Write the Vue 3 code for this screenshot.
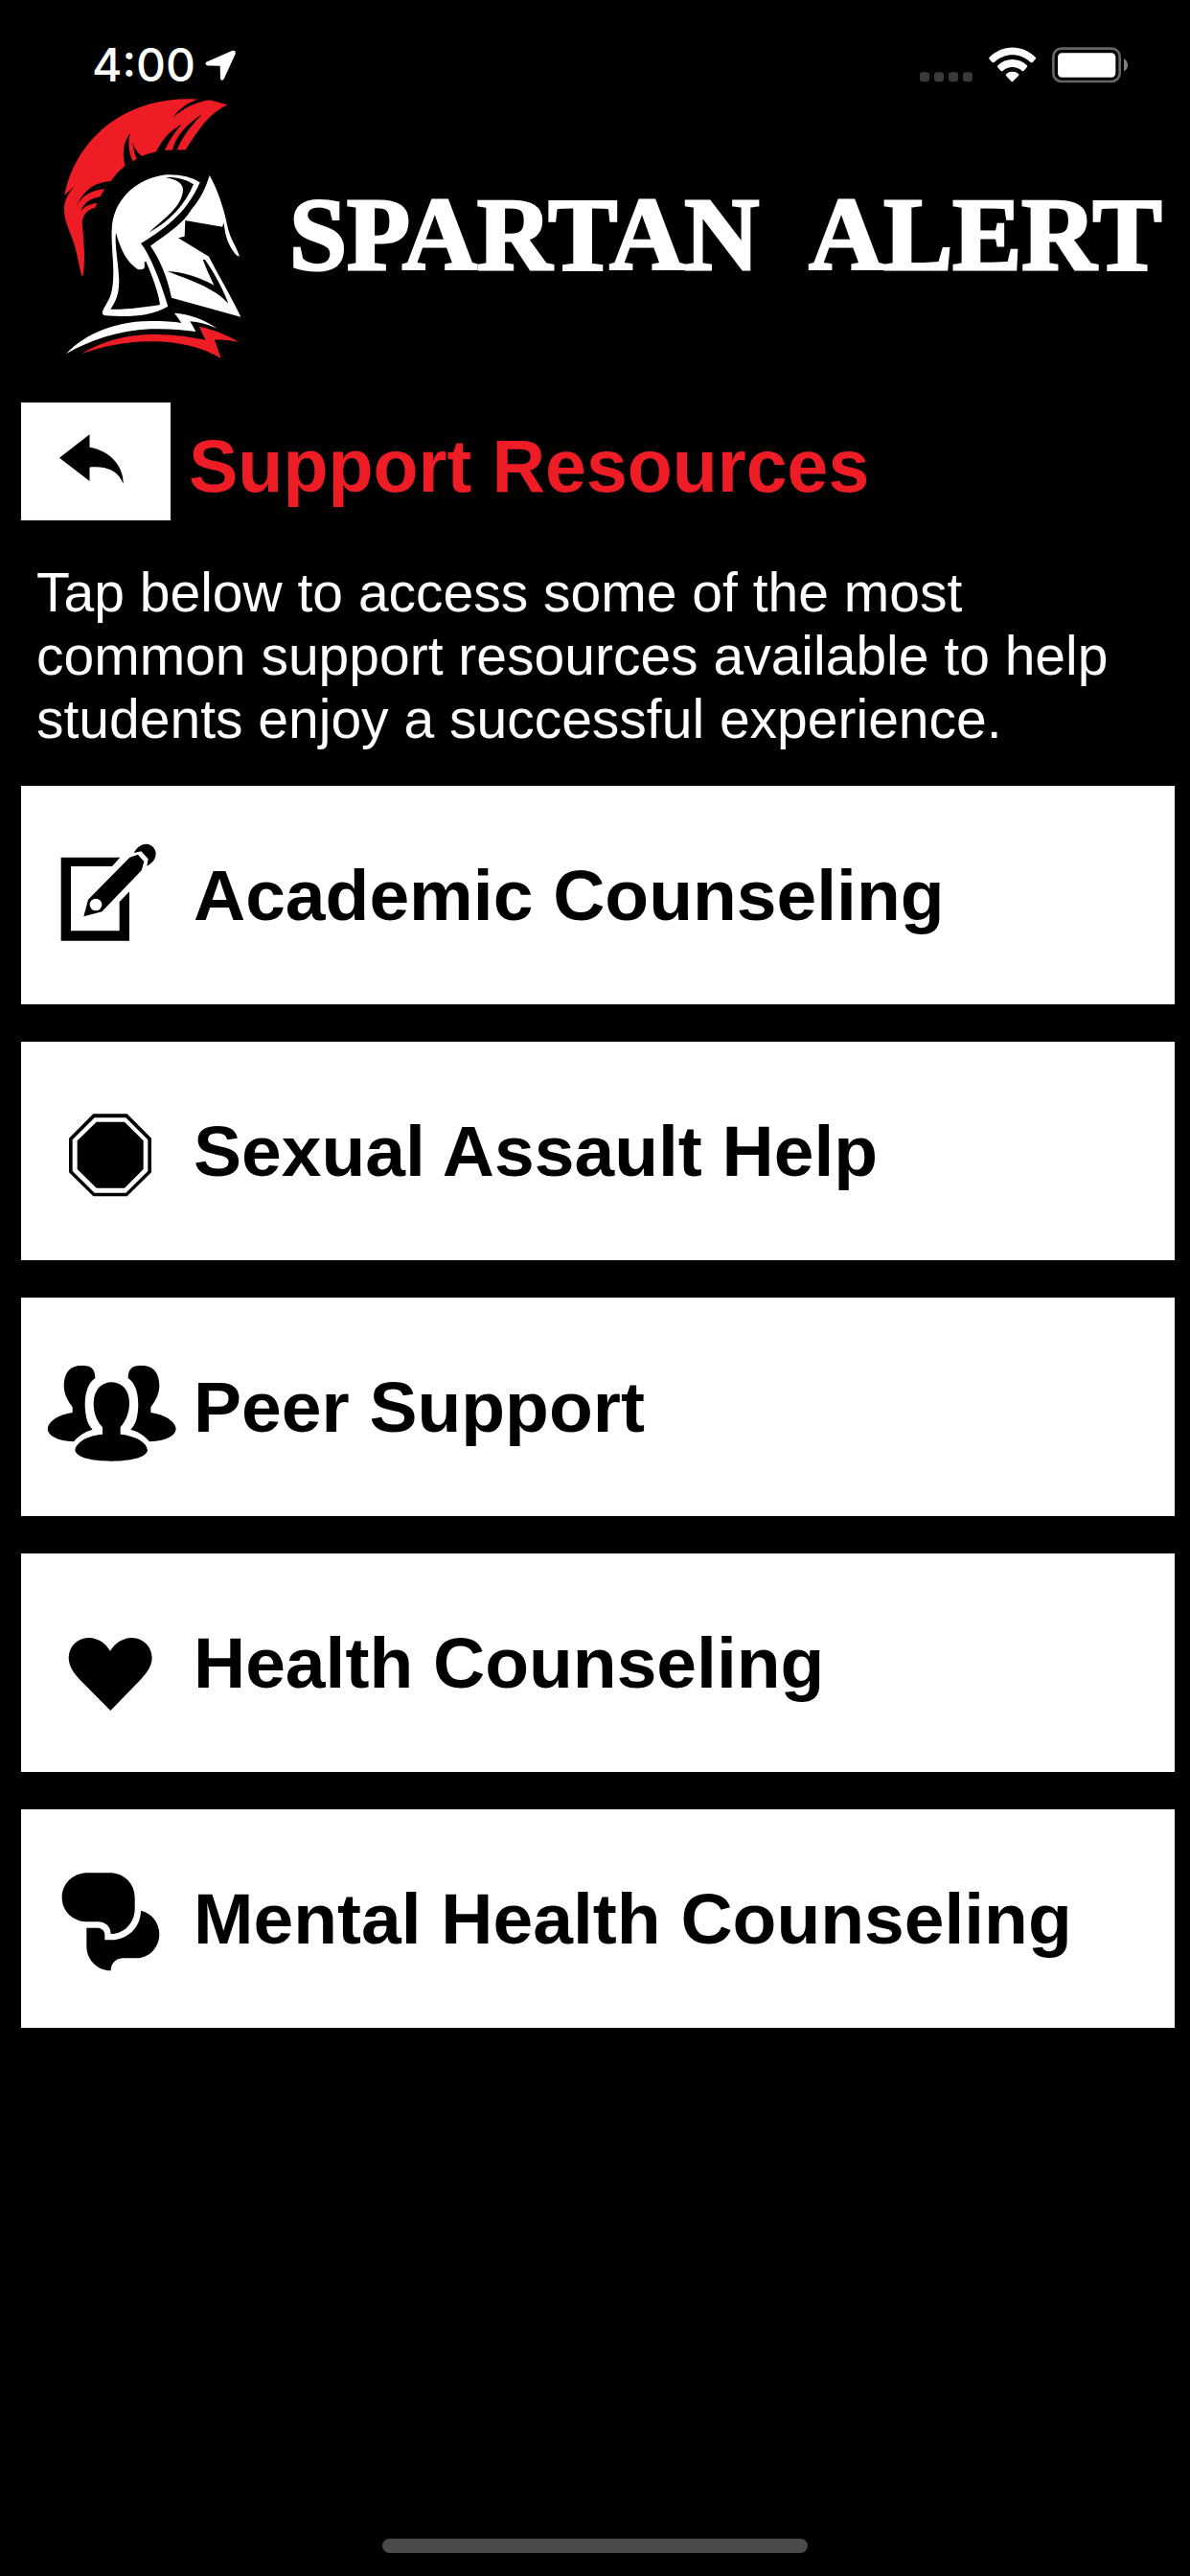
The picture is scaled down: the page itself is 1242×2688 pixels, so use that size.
<template>
  <div class="screen">
    <!-- status bar -->
    <div class="status-bar">
      <div class="status-bar__left">
        <span class="status-bar__time">4:00</span>
        <svg class="status-bar__location" viewBox="640 154 96 98" aria-hidden="true">
          <path d="M644 192 L726 156 Q737 153 735 166 L699 245 Q693 253 688 244 L687 204 L648 203 Q637 199 644 192 Z" fill="#fff" />
        </svg>
      </div>
      <svg class="status-bar__icons" viewBox="120 86 654 114" aria-hidden="true">
        <g fill="#3a3a3a">
          <rect x="120" y="165" width="30" height="30" rx="9" />
          <rect x="165" y="165" width="30" height="30" rx="9" />
          <rect x="210" y="165" width="30" height="30" rx="9" />
          <rect x="255" y="165" width="30" height="30" rx="9" />
        </g>
        <g fill="#fff">
          <path d="M338 118 C380 77 440 77 482 118 Q485 121 482 124 L474 133 Q470 136 466 133 C434 103 386 103 354 133 Q350 136 346 133 L338 124 Q335 121 338 118 Z" />
          <path d="M364 144 C390 119 430 119 456 144 Q458 147 455 150 L446 160 Q442 163 439 160 C422 145 397 145 381 160 Q377 163 373 160 L364 150 Q361 147 364 144 Z" />
          <path d="M390 171 C402 161 418 161 430 171 Q431 174 429 176 L412 193 Q409 196 406 193 L390 176 Q388 174 390 171 Z" />
        </g>
        <rect x="538" y="91" width="208" height="103" rx="25" fill="none" stroke="#666" stroke-width="8" />
        <rect x="552" y="105" width="181" height="76" rx="13" fill="#fff" />
        <path d="M759 123 Q771 130 771 142 Q771 156 759 162 Z" fill="#808080" />
      </svg>
    </div>

    <!-- brand -->
    <header class="brand">
      <svg class="brand__logo" viewBox="0 0 660 930" aria-hidden="true">
        <path class="red" d="M52 340 C70 250 120 170 195 115 C280 55 375 35 472 41 L505 43 L562 58 C505 85 475 130 431 199 L365 200 C340 203 315 210 292 219 L243 248 C225 262 210 277 197 297 L176 324 C165 345 155 360 148 380 C125 385 110 400 107 425 C112 480 118 540 110 592 Q108 597 105 592 C98 560 94 540 88 515 C78 470 52 430 51 390 Z" />
        <g fill="#000">
          <path d="M474 40 C435 52 410 72 391 99 C425 68 460 50 508 42 Z" />
          <path d="M389 201 C400 160 430 120 484 87 C450 120 420 160 403 201 Z" />
          <path d="M338 207 C355 170 385 135 419 120 C400 140 385 160 365 202 Z" />
          <path d="M258 146 C233 180 233 215 242 250 L266 234 C252 205 250 175 258 146 Z" />
          <path d="M265 174 C267 195 270 212 279 228 L294 219 C278 205 268 190 265 174 Z" />
          <path d="M199 297 C150 300 115 320 89 376 C108 342 135 325 178 322 Z" />
          <path d="M170 344 C128 350 112 368 102 392 C115 376 130 368 154 366 Z" />
          <path d="M48 345 L83 313 C64 335 52 355 49 388 L40 350 Z" />
        </g>
        <path fill="#fff" d="M170 708 C175 690 195 670 200 640 C212 580 198 520 200 450 C203 360 270 290 370 277 C410 275 450 283 476 301 C440 385 380 440 291 492 C315 520 350 600 376 689 C320 722 250 722 180 718 C172 716 170 712 170 708 Z" />
        <g fill="#000">
          <path d="M213 458 C225 500 240 545 280 572 C292 577 305 573 303 560 C300 552 303 548 307 548 C325 590 345 640 351 684 C300 692 240 700 196 698 C215 670 222 650 223 610 C222 560 208 500 213 458 Z" />
          <path d="M368 286 C400 280 440 295 456 307 C430 370 380 425 316 458 C370 410 420 375 423 325 C423 300 395 290 368 286 Z" />
        </g>
        <path fill="#fff" d="M506 279 C530 320 550 380 560 428 C570 480 590 500 600 533 L590 529 C565 500 555 470 551 428 L546 440 L430 420 L428 470 L408 475 L504 533 C530 585 575 660 604 722 L387 662 C375 600 350 540 321 500 C370 465 425 430 450 385 C480 350 495 315 506 279 Z" />
        <path fill="#000" d="M373 579 C420 580 480 600 520 623 C510 600 495 570 485 542 L492 543 C525 590 550 640 565 680 C520 630 440 605 373 579 Z" />
        <path fill="#fff" d="M57 838 C120 770 220 735 320 735 C360 735 395 737 418 741 C412 730 403 720 396 710 C440 712 490 730 530 758 C500 745 470 738 445 736 C452 748 458 758 463 768 C420 762 370 758 320 760 C220 765 130 795 57 838 Z" />
        <path class="red" d="M105 838 C170 795 260 775 340 777 C400 778 450 785 494 795 C487 780 480 768 474 752 C520 762 560 778 598 801 C570 795 545 792 522 794 L542 852 C480 815 400 798 320 799 C240 800 170 815 105 838 Z" />
      </svg>
      <h1 class="brand__name">
        <span>SPARTAN</span>
        <span>ALERT</span>
      </h1>
    </header>

    <main class="content">
      <div class="title-row">
        <button class="back" type="button" aria-label="Back">
          <svg class="back__icon" viewBox="185 159 202 156" aria-hidden="true">
            <path d="M185 233 L280 159 V200 C345 210 388 262 386 315 C370 275 335 258 280 263 V306 Z" />
          </svg>
        </button>
        <h2 class="title">Support Resources</h2>
      </div>

      <p class="intro">
        Tap below to access some of the most common support resources available to help students enjoy a successful experience.
      </p>

      <nav class="cards">
        <a v-for="item in resources" :key="item.label" class="card" href="#">
          <svg class="card__icon" :viewBox="item.viewBox" aria-hidden="true">
            <path v-for="d in item.paths" :key="d" :d="d" fill-rule="evenodd" />
          </svg>
          <span class="card__label">{{ item.label }}</span>
        </a>
      </nav>
    </main>

    <div class="home-indicator"></div>
  </div>
</template>

<script setup>
const resources = [
  {
    label: 'Academic Counseling',
    viewBox: '54 72 420 360',
    paths: [
      'M101 134 H286 L261 162 H132 V364 H284 V273 L315 241 V395 H101 Z',
      'M186 266 L316 134 L342 125 L361 147 L353 175 L229 304 L172 319 Z M191 282 A19 19 0 1 0 229 282 A19 19 0 1 0 191 282 Z',
      'M329 120 C340 100 354 92 368 92 C386 93 398 107 398 122 C397 139 388 151 370 161 L374 139 L352 115 Z',
    ],
  },
  {
    label: 'Sexual Assault Help',
    viewBox: '54 63 420 360',
    paths: [
      'M202 127 H308 L384 203 V310 L308 385 H202 L126 310 V203 Z M206 139 L137 208 V306 L206 374 H304 L373 306 V208 L304 139 Z',
      'M212 152 H300 L359 211 V300 L300 359 H212 L152 300 V211 Z',
    ],
  },
  {
    label: 'Peer Support',
    viewBox: '54 54 420 360',
    paths: [
      'M137 252 V235 C118 210 110 190 110 165 C112 125 130 105 165 105 C195 103 208 115 208 144 C185 160 176 190 176 230 C178 270 185 290 200 305 C175 312 155 325 141 343 C90 340 60 325 59 302 C62 278 95 258 137 252 Z',
      'M382 252 V235 C401 210 409 190 409 165 C407 125 389 105 354 105 C324 103 311 115 311 144 C334 160 343 190 343 230 C341 270 334 290 319 305 C344 312 364 325 378 343 C430 340 460 325 461 302 C458 278 424 258 382 252 Z',
      'M231 320 V298 C210 275 203 250 203 222 C204 180 228 157 260 157 C293 158 315 182 315 222 C315 250 306 275 287 298 V320 C335 325 370 345 372 370 C370 392 320 404 260 404 C195 404 148 392 145 370 C148 345 185 323 231 320 Z',
    ],
  },
  {
    label: 'Health Counseling',
    viewBox: '54 15 420 360',
    paths: [
      'M255 158 C240 135 220 118 188 117 C150 118 126 145 125 180 C126 205 138 225 160 248 L256 345 L350 248 C372 225 385 205 386 180 C385 145 360 118 322 117 C292 118 270 135 255 158 Z',
    ],
  },
  {
    label: 'Mental Health Counseling',
    viewBox: '54 66 420 360',
    paths: [
      'M180 103 H258 C300 105 332 138 332 180 V218 C330 262 298 293 257 294 C256 270 240 256 216 256 H180 C137 254 104 222 104 180 C104 138 137 105 180 103 Z',
      'M181 275 H216 C230 276 238 285 238 296 V313 H257 C310 312 350 275 351 221 C385 228 409 260 409 295 C409 338 375 370 337 370 H294 C270 372 257 388 257 409 C215 409 181 375 181 333 Z',
    ],
  },
]
</script>

<style>
body {
  background: #000;
}
</style>

<style scoped>
.screen {
  display: flex;
  flex-direction: column;
  min-height: 100vh;
  box-sizing: border-box;
  background: #000;
  color: #fff;
  font-family: 'Liberation Sans', Arial, Helvetica, sans-serif;
}

.status-bar {
  display: flex;
  justify-content: space-between;
  align-items: center;
  box-sizing: border-box;
  height: 90px;
  padding: 46px 64px 0 96px;
}

.status-bar__left {
  display: flex;
  align-items: center;
  gap: 10px;
}

.status-bar__time {
  font-family: Inter, sans-serif;
  font-size: 48px;
  font-weight: 500;
  line-height: 44px;
}

.status-bar__location {
  width: 32px;
  height: 33px;
}

.status-bar__icons {
  width: 218px;
  height: 38px;
}

.brand {
  display: flex;
  align-items: center;
  gap: 32px;
  padding: 0 24px 0 50px;
}

.brand__logo {
  flex: none;
  width: 220px;
  height: 310px;
}

.red {
  fill: #ee1c25;
}

.brand__name {
  display: flex;
  gap: 52px;
  margin: 0;
  font-family: 'Liberation Serif', 'Times New Roman', serif;
  font-size: 108px;
  font-weight: 700;
  line-height: 120px;
  white-space: nowrap;
  -webkit-text-stroke: 3px #fff;
}

.content {
  flex: 1;
  padding: 20px 16px 0 22px;
}

.title-row {
  display: flex;
  align-items: flex-start;
  gap: 19px;
}

.back {
  display: flex;
  align-items: center;
  justify-content: center;
  flex: none;
  width: 156px;
  height: 123px;
  padding: 0 9px 6px 0;
  border: none;
  border-radius: 0;
  background: #fff;
  cursor: pointer;
}

.back__icon {
  width: 67px;
  height: 52px;
}

.title {
  margin: 0;
  color: #ee1c25;
  font-size: 77px;
  font-weight: 700;
  line-height: 132px;
}

.intro {
  margin: 33px 16px 37px;
  font-size: 57px;
  line-height: 66px;
}

.cards {
  display: flex;
  flex-direction: column;
  gap: 39px;
}

.card {
  display: flex;
  align-items: center;
  gap: 14px;
  min-height: 228px;
  padding: 0 26px;
  box-sizing: border-box;
  background: #fff;
  color: #000;
  text-decoration: none;
}

.card__icon {
  flex: none;
  width: 140px;
  height: 120px;
}

.card__label {
  font-size: 75px;
  font-weight: 700;
  line-height: 84px;
}

.home-indicator {
  align-self: center;
  width: 444px;
  height: 15px;
  margin-bottom: 24px;
  border-radius: 8px;
  background: #4a4a4a;
}
</style>
